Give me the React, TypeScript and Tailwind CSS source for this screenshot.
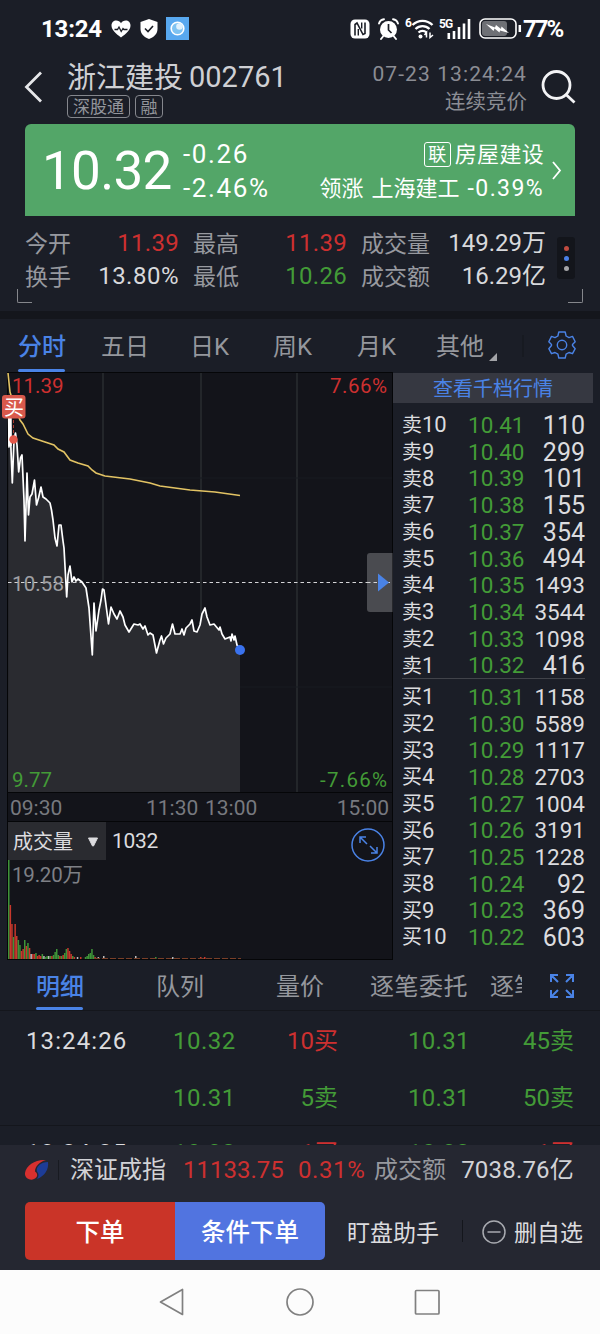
import type { ReactNode } from 'react';

const GREEN = 'text-[#439b37]';
const RED = 'text-[#cd3030]';

const sellOrders = [
  ['10', '10.41', '110'],
  ['9', '10.40', '299'],
  ['8', '10.39', '101'],
  ['7', '10.38', '155'],
  ['6', '10.37', '354'],
  ['5', '10.36', '494'],
  ['4', '10.35', '1493'],
  ['3', '10.34', '3544'],
  ['2', '10.33', '1098'],
  ['1', '10.32', '416'],
];

const buyOrders = [
  ['1', '10.31', '1158'],
  ['2', '10.30', '5589'],
  ['3', '10.29', '1117'],
  ['4', '10.28', '2703'],
  ['5', '10.27', '1004'],
  ['6', '10.26', '3191'],
  ['7', '10.25', '1228'],
  ['8', '10.24', '92'],
  ['9', '10.23', '369'],
  ['10', '10.22', '603'],
];

const pricePoints =
  '8.5,395 9,447 10,418 11,450 12.3,483 14,440 15.5,433 17,445 18.7,472 20.5,458 22,455 24,500 25,541 27,473 28.5,515 30,497 32,494 34.5,480 36.5,505 38.5,498 41,487 43,497 46,499 50,503 51.5,510 53,520 55,538 57,546 59,525 61,525 63,541 64,548 66.7,597 68,575 70,566 72,582 74,577 76,581 78,579 82,582 86,588 89,608 92.3,655 94,603 96,631 99,610 101,600 102.5,589 104,590 106,605 108.5,624 111,607 114,614 117,619 120,611 123,617 125,625 129,632 134,624 138,625 140,624 143,629 145,626 148,635 150,633 153,635 156.5,653 160,640 161.5,636 163.5,644 166,638 168,636 170,634 172.5,624 175,634 180,634 182,629 184,635 186,628 190,624 192,620 194,631 197,632 200,625 202,614 205,608 207,617 210,625 214,624 219,630 220,627 222,634 225,639 230,637 231,641 232,634 234,640 235,636 237,645 240,650';

const averagePoints =
  '8,373 10,392 14,405 20,420 23,424 28,434 33,438 45,442 54,445 58,449 64,452 70,460 78,463 88,466 92,470 96,473 105,476 130,479 150,483 160,486 190,490 215,492 240,495.5';

// [x, height, colour]
const volumeBars: [number, number, string][] = [
  [8, 99, '#3f9438'],
  [9.6, 54, '#c8382c'],
  [11.2, 35, '#c8382c'],
  [12.8, 22, '#3f9438'],
  [14.4, 35, '#c8382c'],
  [16, 23, '#c8382c'],
  [17.6, 19, '#3f9438'],
  [19.2, 14, '#3f9438'],
  [20.8, 8, '#c8382c'],
  [22.4, 10, '#c8382c'],
  [24, 19, '#3f9438'],
  [25.6, 13, '#c8382c'],
  [27.2, 16, '#3f9438'],
  [28.8, 11, '#c8382c'],
  [30.4, 5, '#bbbbbb'],
  [32, 5, '#c8382c'],
  [33.6, 5, '#c8382c'],
  [35.2, 6, '#3f9438'],
  [36.8, 3, '#c8382c'],
  [38.4, 4, '#c8382c'],
  [40, 3, '#c8382c'],
  [41.6, 5, '#3f9438'],
  [43.2, 3, '#bbbbbb'],
  [44.8, 2, '#3f9438'],
  [46.4, 3, '#3f9438'],
  [48, 3, '#bbbbbb'],
  [49.6, 3, '#3f9438'],
  [51.2, 3, '#c8382c'],
  [52.8, 4, '#3f9438'],
  [54.4, 7, '#3f9438'],
  [56, 10, '#3f9438'],
  [57.6, 4, '#3f9438'],
  [59.2, 3, '#c8382c'],
  [60.8, 3, '#3f9438'],
  [62.4, 4, '#c8382c'],
  [64, 6, '#3f9438'],
  [65.6, 10, '#3f9438'],
  [67.2, 11, '#c8382c'],
  [68.8, 8, '#c8382c'],
  [70.4, 5, '#c8382c'],
  [72, 3, '#3f9438'],
  [73.6, 2, '#c8382c'],
  [76.8, 2, '#bbbbbb'],
  [80, 2, '#c8382c'],
  [84.8, 2, '#3f9438'],
  [86.4, 3, '#3f9438'],
  [88, 5, '#3f9438'],
  [89.6, 6, '#3f9438'],
  [91.2, 10, '#3f9438'],
  [92.8, 4, '#3f9438'],
  [94.4, 2, '#c8382c'],
  [97.6, 2, '#bbbbbb'],
  [103, 3, '#bbbbbb'],
  [135, 3, '#bbbbbb'],
  [155, 2, '#3f9438'],
  [172, 2, '#bbbbbb'],
  [200, 2, '#c8382c'],
  [204, 2, '#c8382c'],
];

function StatusBar() {
  return (
    <div className="flex h-[57px] items-center pl-[41px] pr-[36px] text-[24px] font-bold text-white">
      <span className="w-[70px] tracking-[-0.2px]">13:24</span>
      <svg width="20" height="18" viewBox="0 0 20 18">
        <path d="M10 17.500C5 13.500 .5 10 .5 5.400.5 2.500 2.700.5 5.200.5 7.300.5 9 1.600 10 3.200 11 1.600 12.700.5 14.800.5c2.500 0 4.700 2 4.700 4.900C19.500 10 15 13.500 10 17.500z" fill="#fff" />
        <path d="M3.500 9.500h3l1.500-2.500 2.200 4.500 1.800-3 1 1h3.500" fill="none" stroke="#1b1e26" strokeWidth="1.300" />
      </svg>
      <svg width="18" height="20" viewBox="0 0 18 20" className="ml-[9px]">
        <path d="M9 0l8.500 3v7c0 5-4 8.500-8.500 10C4.500 18.500.5 15 .5 10V3z" fill="#fff" />
        <path d="M5 9.500l3 3 5-5.500" fill="none" stroke="#1b1e26" strokeWidth="1.600" />
      </svg>
      <div className="ml-2 flex size-[23px] items-center justify-center bg-[#58a8ef]">
        <svg width="17" height="17" viewBox="0 0 17 17">
          <circle cx="8.500" cy="8.500" r="6.300" fill="#7fc3f2" stroke="#fff" strokeWidth="1.600" />
          <circle cx="10.500" cy="6.500" r="3.300" fill="#dff1fd" />
        </svg>
      </div>
      <div className="flex-1" />
      <svg width="20" height="20" viewBox="0 0 20 20">
        <rect x=".5" y=".5" width="19" height="19" rx="4.500" fill="#fff" />
        <path d="M5 16.500V5.500L7 4 13 15.500 15 14.500V3.500" fill="none" stroke="#1b1e26" strokeWidth="1.600" />
        <path d="M8.300 10V16.500M11.700 3.500v6" fill="none" stroke="#1b1e26" strokeWidth="1.400" />
      </svg>
      <svg width="21" height="22" viewBox="0 0 21 22" className="ml-2">
        <circle cx="10.500" cy="11.500" r="8.500" fill="#fff" />
        <path d="M1 5.500A6 6 0 0 1 6 1.200M20 5.500A6 6 0 0 0 15 1.200M5 18.500l-2 2.500M16 18.500l2 2.500" fill="none" stroke="#fff" strokeWidth="1.900" strokeLinecap="round" />
        <path d="M10.500 6v6l3 3" fill="none" stroke="#1b1e26" strokeWidth="1.700" />
      </svg>
      <div className="ml-[6px] flex items-start">
        <span className="text-[12px] leading-[10px]">6</span>
        <svg width="24" height="21" viewBox="0 0 24 21" className="ml-[-1px]">
          <path d="M1.500 7a14 14 0 0 1 20 0M4.500 11a10 10 0 0 1 14 0M7.500 14.500a6 6 0 0 1 8 0" fill="none" stroke="#fff" strokeWidth="2.300" />
          <circle cx="9.500" cy="18.500" r="2" fill="#fff" />
          <path d="M15.500 19.500v-5l-2 2.500M19 14.500v5l3-2.500" fill="none" stroke="#fff" strokeWidth="1.500" />
        </svg>
      </div>
      <div className="ml-[4px] flex items-start">
        <span className="w-2 text-[12px] leading-[12px] tracking-[-0.8px]">5G</span>
        <svg width="24" height="21" viewBox="0 0 24 21">
          <path d="M1.800 21v-6M7 21v-8M12 21V9M17 21V5.500M22 21V1" fill="none" stroke="#fff" strokeWidth="2.600" />
        </svg>
      </div>
      <svg width="44" height="21" viewBox="0 0 44 21" className="ml-2">
        <rect x="1" y="1" width="36" height="19" rx="5" fill="#1b1e26" stroke="#fff" strokeWidth="1.600" />
        <rect x="3" y="3" width="25" height="15" rx="3" fill="#6e7075" />
        <path d="M7 6l9 3.500 1-2.500 5 4 .5-2.500L30 15l-9-2.500-.5 2-5-4-1 2.500z" fill="#fff" />
        <path d="M40.800 7v7" stroke="#fff" strokeWidth="2.500" />
      </svg>
      <span className="w-[41px] whitespace-nowrap tracking-[-2px]">77%</span>
    </div>
  );
}

function Header() {
  return (
    <div className="flex h-[67px]">
      <svg width="67" height="60" viewBox="0 0 67 60" fill="none" stroke="#e6e7ea" strokeWidth="2.800">
        <path d="M41 15.500L26.500 30 41 44.500" />
      </svg>
      <div className="flex flex-col text-[#cfd0d4]">
        <div className="flex h-[38px] items-center gap-[6px] pt-[5px]">
          <span className="text-[29px]">浙江建投</span>
          <span className="mt-[-2px] text-[29px]">002761</span>
        </div>
        <div className="flex gap-[5px] text-[17px] text-[#94969c]">
          <span className="flex h-[23px] w-[63px] items-center justify-center rounded-[4px] border border-[#85878d] pt-px">深股通</span>
          <span className="flex h-[23px] w-[28px] items-center justify-center rounded-[4px] border border-[#85878d] pt-px">融</span>
        </div>
      </div>
      <div className="flex-1" />
      <div className="flex flex-col items-end text-[21px] text-[#8b8d94]">
        <span className="flex h-[34px] items-center tracking-[1.1px]">07-23 13:24:24</span>
        <span className="mt-[-3px] flex h-[28px] items-center pt-px text-[20.500px]">连续竞价</span>
      </div>
      <svg width="73" height="60" viewBox="0 0 73 60" fill="none" stroke="#f3f3f5" strokeWidth="2.800">
        <circle cx="29.500" cy="28" r="13.500" />
        <path d="M39 37.500l8.500 8" />
      </svg>
    </div>
  );
}

function QuoteCard() {
  return (
    <div className="mx-[25px] flex h-[92px] rounded-t-[6px] bg-[#53a668] text-white">
      <span className="ml-[17px] flex w-[141px] items-center pt-[3px] text-[53px] tracking-[-0.7px]">10.32</span>
      <div className="flex flex-col pt-[13px] text-[26px] tracking-[1.600px]">
        <span className="flex h-[34px] items-center">-0.26</span>
        <span className="flex h-[34px] items-center">-2.46%</span>
      </div>
      <div className="flex-1" />
      <div className="flex flex-col items-end pt-[13px] text-[22px]">
        <div className="flex h-[34px] items-center gap-[4px]">
          <span className="flex h-[25px] w-[27px] items-center justify-center rounded-[3px] border pt-px text-[18px]">联</span>
          <span className="pt-[2px] tracking-[0.300px]">房屋建设</span>
        </div>
        <div className="flex h-[34px] items-center gap-[8px]">
          <span className="pt-[2px]">领涨</span>
          <span className="pt-[2px]">上海建工</span>
          <span className="text-[23px] tracking-[1.400px]">-0.39%</span>
        </div>
      </div>
      <svg width="31" height="92" viewBox="0 0 31 92" fill="none" stroke="#fff" strokeWidth="1.800">
        <path d="M9 38l7 8.500-7 8.500" />
      </svg>
    </div>
  );
}

function Stat({ label, value, className }: { label: string; value: string; className: string }) {
  return (
    <div className="flex items-center justify-between whitespace-nowrap">
      <span className="pt-[3px] text-[23px] text-[#97999f]">{label}</span>
      <span className={`pt-px text-[24px] ${className}`}>{value}</span>
    </div>
  );
}

function Stats() {
  return (
    <div className="relative h-[95px] pl-[25px] pt-[10px]">
      <div className="flex">
        <div className="grid grid-cols-[154px_154px_185px] grid-rows-[33px_33px] gap-x-[14px]">
          <Stat label="今开" value="11.39" className={`tracking-[0.300px] ${RED}`} />
          <Stat label="最高" value="11.39" className={`tracking-[0.300px] ${RED}`} />
          <Stat label="成交量" value="149.29万" className="text-[#d8d9dc]" />
          <Stat label="换手" value="13.80%" className="tracking-[0.500px] text-[#d8d9dc]" />
          <Stat label="最低" value="10.26" className={`tracking-[0.300px] ${GREEN}`} />
          <Stat label="成交额" value="16.29亿" className="text-[#d8d9dc]" />
        </div>
        <div className="ml-[11px] mt-[11px] flex h-[42px] w-[18px] flex-col items-center justify-center gap-[5px] rounded-[3px] bg-[#13151b]">
          <i className="size-[5px] rounded-full bg-[#c04b40]" />
          <i className="size-[5px] rounded-full bg-[#4a80e8]" />
          <i className="size-[5px] rounded-full bg-[#a5a5a8]" />
        </div>
      </div>
      <i className="absolute bottom-[8px] left-[17px] h-[14px] w-[15px] rounded-bl-[2px] border-b border-l border-[#85878c]" />
      <i className="absolute bottom-[8px] right-[17px] h-[14px] w-[15px] rounded-br-[2px] border-b border-r border-[#85878c]" />
    </div>
  );
}

function Tab({ children, active, className }: { children: ReactNode; active?: boolean; className: string }) {
  return (
    <div className={`flex h-full flex-col whitespace-nowrap ${active ? 'font-medium text-[#4a83e6]' : 'text-[#95979d]'} ${className}`}>
      <div className="flex flex-1 items-center pt-[5px]">{children}</div>
      <i className={`h-[3px] w-[47px] rounded-full ${active ? 'bg-[#4a83e6]' : ''}`} />
    </div>
  );
}

function PeriodTabs() {
  return (
    <div className="flex h-[54px] pl-[18px] text-[24px]">
      <Tab active className="w-[83px] pb-px">分时</Tab>
      <Tab className="w-[89px] pb-px">五日</Tab>
      <Tab className="w-[83px] pb-px">日K</Tab>
      <Tab className="w-[84px] pb-px">周K</Tab>
      <Tab className="w-[79px] pb-px">月K</Tab>
      <Tab className="w-[52px] pb-px">其他</Tab>
      <svg width="80" height="53" viewBox="0 0 80 53">
        <path d="M9 34v8H1z" fill="#a3a4a8" />
        <path d="M35 16v22" stroke="#14161c" />
      </svg>
      <svg width="32" height="53" viewBox="-16 -26 32 53" className="ml-[-22px]" fill="none" stroke="#4a83e6" strokeWidth="1.400" strokeLinejoin="round">
        <path d="M-3.200 -13h6.400l.9 4 2.900 1.600 3.500-1.200 2.700 5.400-2.700 2.700v1l2.700 3.200-2.700 5-3.500-1.200-2.900 1.700-.9 3.800h-6.400l-.9-3.800-2.900-1.700-3.500 1.200-2.700-5 2.700-3.200v-1l-2.700-2.700 2.700-5.400 3.500 1.200 2.900-1.600z" />
        <circle cx="0" cy="0" r="4.700" />
      </svg>
    </div>
  );
}

function PriceChart() {
  return (
    <div className="relative h-[420px]">
      <svg width="386" height="420" viewBox="7 373 386 420" className="block overflow-visible">
        <rect x="7.500" y="372.500" width="385" height="420" fill="#13141a" stroke="#050608" />
        <path d="M103 373v419M201 373v419M297 373v419" stroke="#2a2c31" strokeWidth="1.500" />
        <path d="M8 478h384M8 687h384" stroke="#191b20" />
        <polygon points={`8,792 ${pricePoints} 240,792`} fill="#2a2b30" />
        <path d="M8 582.500h384" stroke="#d5d5d8" strokeWidth="1.200" strokeDasharray="3.500 3" />
        <polyline points={averagePoints} fill="none" stroke="#e2c364" strokeWidth="1.600" />
        <polyline points={pricePoints} fill="none" stroke="#fff" strokeWidth="1.700" strokeLinejoin="round" />
        <path d="M10 396v50" stroke="#fff" strokeWidth="3.500" />
        <circle cx="240" cy="650" r="5" fill="#3a72ee" />
        <path d="M13.500 420v16" stroke="#a83a30" strokeDasharray="3 2" />
        <circle cx="13.500" cy="439.500" r="4.200" fill="#e4584a" />
        <rect x="2" y="395" width="23.500" height="23.500" rx="3" fill="#d8594c" />
        <path d="M370 553h22.500v59H370a3 3 0 0 1-3-3v-53a3 3 0 0 1 3-3z" fill="#4a4b50" />
        <path d="M367 582.500h25" stroke="#d5d5d8" strokeWidth="1.200" strokeDasharray="3.500 3" />
        <path d="M378 573.500l11 9-11 9z" fill="#4a83e6" />
        <g fontSize="20.500">
          <text x="4" y="414.500" fontSize="20" fill="#fff">买</text>
          <text x="12" y="393" className="fill-[#cd3030]">11.39</text>
          <text x="387" y="393" textAnchor="end" className="fill-[#cd3030]" textLength="57">7.66%</text>
          <text x="12" y="590.500" fill="#a0a1a5" textLength="52">10.58</text>
          <text x="12" y="787" className="fill-[#439b37]">9.77</text>
          <text x="387" y="787" textAnchor="end" className="fill-[#439b37]" textLength="67">-7.66%</text>
        </g>
      </svg>
    </div>
  );
}

function VolumeChart() {
  return (
    <div className="flex h-[139px] flex-col border border-[#050608] bg-[#13141a]">
      <div className="flex h-[38px]">
        <div className="flex w-[98px] items-center bg-[#2a2b30] pl-[5px] pt-[2px] text-[20px] text-[#dcdcdf]">
          成交量
          <svg width="12" height="10" viewBox="0 0 12 10" className="ml-[14px]">
            <path d="M1.500 1h9L6.500 9h-1z" fill="#dcdcdf" stroke="#dcdcdf" strokeLinejoin="round" />
          </svg>
        </div>
        <span className="ml-[6px] flex items-center pt-px text-[21px] tracking-[-0.300px] text-[#dcdcdf]">1032</span>
        <div className="flex-1" />
        <svg width="34" height="34" viewBox="0 0 34 34" className="mr-[7px] mt-[6px]" fill="none" stroke="#4a83e6" strokeWidth="1.500">
          <circle cx="17" cy="17" r="16" />
          <path d="M9 15V9h6M9 9l7 7M19 18l7 7M26 19v6h-6" />
        </svg>
      </div>
      <svg width="384" height="99" viewBox="8 861 384 99">
        {volumeBars.map(([x, height, color]) => (
          <rect key={x} x={x} y={960 - height} width="1.500" height={height} fill={color} />
        ))}
        <path d="M94 959.500h147" stroke="#7a3f28" strokeDasharray="6 2" />
        <text x="12" y="882.500" fontSize="20.500" fill="#7e8086" textLength="71">19.20万</text>
      </svg>
    </div>
  );
}

function OrderRows({ side, orders }: { side: string; orders: string[][] }) {
  return (
    <div>
      {orders.map(([level, price, amount]) => (
        <div key={level} className="flex h-[26.700px] items-center pl-[9px] pr-[8px]">
          <span className="w-[66px] text-[22px] text-[#dcdcdf]">
            <span className="text-[20px]">{side}</span>
            {level}
          </span>
          <span className={`text-[22.500px] ${GREEN}`}>{price}</span>
          <span className={`ml-auto text-[#dcdcdf] ${amount.length > 3 ? 'text-[22.500px]' : 'text-[25px]'}`}>{amount}</span>
        </div>
      ))}
    </div>
  );
}

function OrderBook() {
  return (
    <div className="w-[200px]">
      <div className="mb-[9px] flex h-[30px] items-center justify-center bg-[#363841] pt-px text-[20px] text-[#4a83e6]">查看千档行情</div>
      <OrderRows side="卖" orders={sellOrders} />
      <div className="mb-[5px] ml-[9px] mr-[8px] mt-[-1px] h-px bg-[#41434a]" />
      <OrderRows side="买" orders={buyOrders} />
    </div>
  );
}

function MarketPanel() {
  return (
    <div className="flex h-[588px] pl-[7px]">
      <div className="w-[386px]">
        <PriceChart />
        <div className="flex h-[28px] items-center border-x border-[#050608] bg-[#13141a] pl-[2px] pr-[3px] pt-[2px] text-[21px] text-[#77797f]">
          <span className="w-[136px]">09:30</span>
          <span className="w-[59px]">11:30</span>
          <span>13:00</span>
          <span className="ml-auto">15:00</span>
        </div>
        <VolumeChart />
      </div>
      <OrderBook />
    </div>
  );
}

function DetailTabs() {
  return (
    <div className="flex h-[50px] border-b border-[#14161c] pl-[36px] text-[24px]">
      <Tab active className="w-[120px]">明细</Tab>
      <Tab className="w-[120px]">队列</Tab>
      <Tab className="w-[94px]">量价</Tab>
      <Tab className="w-[120px] tracking-[0.500px]">逐笔委托</Tab>
      <Tab className="w-[32px] overflow-hidden">逐笔成交</Tab>
      <svg width="26" height="26" viewBox="0 0 26 26" className="ml-[27px] mt-[12px]" fill="none" stroke="#4a83e6" strokeWidth="2">
        <path d="M2 9V2h7M2 2l7 7M17 2h7v7M24 2l-7 7M2 17v7h7M2 24l7-7M24 17v7h-7M24 24l-7-7" />
      </svg>
    </div>
  );
}

type Trade = { time?: string; price: string; lot: string; price2: string; lot2: string; up?: boolean; up2?: boolean };

function TradeRow({ time, price, lot, price2, lot2, up, up2 }: Trade) {
  return (
    <div className="flex h-[57px] shrink-0 items-center pl-[26px] pr-[26px] pt-[2px] text-[24px]">
      <span className="w-[147px] tracking-[1.100px] text-[#dcdcdf]">{time}</span>
      <span className={`w-[70px] tracking-[0.500px] ${GREEN}`}>{price}</span>
      <span className={`w-[95px] text-right ${up ? RED : GREEN}`}>{lot}</span>
      <span className={`ml-[70px] tracking-[0.300px] ${GREEN}`}>{price2}</span>
      <span className={`ml-auto ${up2 ? RED : GREEN}`}>{lot2}</span>
    </div>
  );
}

function Trades() {
  return (
    <div className="flex h-[134px] flex-col overflow-hidden">
      <TradeRow time="13:24:26" price="10.32" lot="10买" price2="10.31" lot2="45卖" up />
      <TradeRow price="10.31" lot="5卖" price2="10.31" lot2="50卖" />
      <div className="h-px shrink-0 bg-[#14161c]" />
      <div className="mt-[-3px]">
        <TradeRow time="13:24:25" price="10.32" lot="1买" price2="10.32" lot2="1买" up up2 />
      </div>
    </div>
  );
}

function Footer() {
  return (
    <div className="h-[125px] bg-[#252731]">
      <div className="flex h-[50px] items-center whitespace-nowrap pl-[25px] pr-[26px] text-[24px]">
        <svg width="24" height="22" viewBox="0 0 24 22">
          <path d="M21 1C11 0 1 6 0 14c-.5 5 5 8 9 6 4-1.500 4-6 1-7.500 0-5 4-9.500 11-11.500z" fill="#d8302f" />
          <path d="M23 3c1 7-3 14-11 17 2-3 2-5 0-7.500C10.500 8 16 3 23 3z" fill="#1d3c96" />
        </svg>
        <i className="ml-[9px] mr-[11px] h-[20px] w-px bg-[#181a21]" />
        <span className="w-[113px] text-[#d2d3d7]">深证成指</span>
        <span className={`w-[115px] ${RED}`}>11133.75</span>
        <span className={`w-[76px] tracking-[0.600px] ${RED}`}>0.31%</span>
        <span className="text-[#97999f]">成交额</span>
        <span className="ml-auto tracking-[0.200px] text-[#d2d3d7]">7038.76亿</span>
      </div>
      <div className="mt-[7px] flex h-[58px] items-center whitespace-nowrap pl-[25px] text-[24.500px] text-white">
        <div className="flex h-full w-[150px] items-center justify-center rounded-l-[5px] bg-[#ca3428] pt-[4px] font-medium">下单</div>
        <div className="flex h-full w-[150px] items-center justify-center rounded-r-[5px] bg-[#5174e0] pt-[4px] font-medium">条件下单</div>
        <span className="ml-[22px] pt-[4px] text-[23px] text-[#dcdcdf]">盯盘助手</span>
        <i className="ml-[23px] h-[22px] w-px bg-[#14161c]" />
        <svg width="24" height="24" viewBox="0 0 24 24" className="ml-[19px] mt-[2px]" fill="none" stroke="#a8aab0" strokeWidth="1.500">
          <circle cx="12" cy="12" r="11" />
          <path d="M5.500 12h13" />
        </svg>
        <span className="ml-[8px] pt-[4px] text-[23px] text-[#dcdcdf]">删自选</span>
      </div>
    </div>
  );
}

function SystemNav() {
  return (
    <div className="flex h-[64px] justify-center gap-[99px] bg-[#fcfcfc]">
      <svg width="28" height="64" viewBox="0 0 28 64" fill="none" stroke="#808080" strokeWidth="1.700" strokeLinejoin="round">
        <path d="M24.500 19.500v25L2.500 32z" />
      </svg>
      <svg width="30" height="64" viewBox="0 0 30 64" fill="none" stroke="#808080" strokeWidth="1.700">
        <circle cx="15" cy="32" r="13" />
      </svg>
      <svg width="28" height="64" viewBox="0 0 28 64" fill="none" stroke="#808080" strokeWidth="1.700">
        <rect x="1.500" y="20.500" width="23.500" height="23.500" rx="1" />
      </svg>
    </div>
  );
}

export default function App() {
  return (
    <div className="h-[1334px] w-[600px] overflow-hidden bg-[#1b1e27] font-['Roboto','Noto_Sans_CJK_SC',sans-serif] leading-none">
      <StatusBar />
      <Header />
      <QuoteCard />
      <Stats />
      <div className="h-[8px] bg-[#14161c]" />
      <PeriodTabs />
      <MarketPanel />
      <DetailTabs />
      <Trades />
      <Footer />
      <SystemNav />
    </div>
  );
}
